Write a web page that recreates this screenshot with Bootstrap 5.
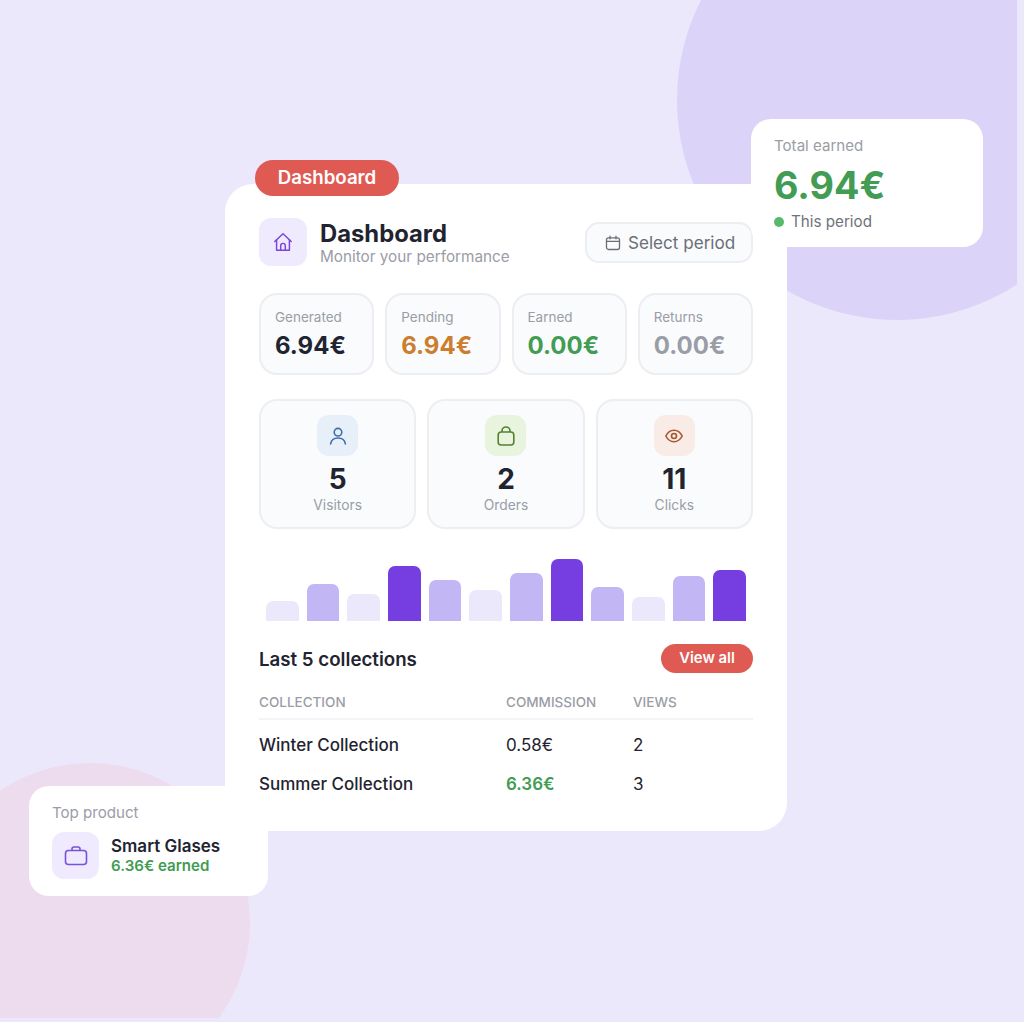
<!DOCTYPE html>
<html lang="en">
<head>
  <meta charset="UTF-8">
  <meta name="viewport" content="width=device-width, initial-scale=1.0">
  <title>Dashboard</title>
  <link href="https://cdn.jsdelivr.net/npm/bootstrap@5.3.0/dist/css/bootstrap.min.css" rel="stylesheet">
  <style>
    body {
      margin: 0;
      background-color: #ece8fc;
      font-family: Inter, "Liberation Sans", sans-serif;
      color: #1f2430;
    }
    .canvas {
      position: relative;
      width: 1024px;
      height: 1022px;
      overflow: hidden;
      background-color: #ece8fc;
    }
    .blob-clip {
      position: absolute;
      left: 0;
      top: 0;
      width: 1017px;
      height: 1018px;
      overflow: hidden;
    }
    .blob-purple {
      position: absolute;
      left: 677px;
      top: -120px;
      width: 440px;
      height: 440px;
      border-radius: 50%;
      background-color: #dcd4f8;
    }
    .blob-pink {
      position: absolute;
      left: -70px;
      top: 763px;
      width: 320px;
      height: 320px;
      border-radius: 50%;
      background-color: #eddcee;
    }
    .panel {
      position: absolute;
      left: 225px;
      top: 184px;
      width: 562px;
      height: 647px;
      padding: 34px;
      background-color: #fff;
      border-radius: 28px;
    }
    .tag-red {
      position: absolute;
      left: 255px;
      top: 160px;
      width: 144px;
      height: 36px;
      border-radius: 18px;
      background-color: #e05a54;
      color: #fff;
      font-weight: 600;
      font-size: 18.7px;
      line-height: 36px;
      text-align: center;
    }
    .float-total {
      position: absolute;
      left: 751px;
      top: 119px;
      width: 232px;
      height: 128px;
      padding: 17px 23px;
      background-color: #fff;
      border-radius: 20px;
    }
    .float-top {
      position: absolute;
      left: 29px;
      top: 786px;
      width: 239px;
      height: 110px;
      padding: 17px 23px;
      background-color: #fff;
      border-radius: 20px;
    }
    .muted {
      color: #9a9da6;
    }
    .total-label {
      font-size: 15.1px;
      line-height: 20px;
    }
    .total-value {
      color: #429c53;
      font-size: 37.7px;
      font-weight: 700;
      line-height: 44px;
      margin-top: 7px;
    }
    .total-note {
      gap: 7px;
      font-size: 15.2px;
      line-height: 20px;
      color: #6f727b;
      margin-top: 5px;
    }
    .dot {
      width: 10px;
      height: 10px;
      border-radius: 50%;
      background-color: #55bb6a;
    }
    .icon-box {
      display: flex;
      align-items: center;
      justify-content: center;
      flex-shrink: 0;
      border-radius: 12px;
    }
    .head-icon {
      width: 48px;
      height: 48px;
      background-color: #efeafd;
    }
    .head-title {
      font-size: 23.8px;
      font-weight: 700;
      line-height: 29px;
    }
    .head-sub {
      font-size: 15.3px;
      line-height: 18px;
    }
    .head-left {
      gap: 13px;
    }
    .period-btn {
      display: flex;
      align-items: center;
      gap: 7px;
      width: 168px;
      height: 41px;
      margin-top: 4px;
      padding: 0 14px 0 18px;
      border: 2px solid #eceef1;
      border-radius: 14px;
      background-color: #f9fbfd;
      color: #6b6e77;
      font-size: 17.1px;
      white-space: nowrap;
    }
    .period-btn svg {
      flex-shrink: 0;
    }
    .stat-row {
      display: grid;
      grid-template-columns: repeat(4, 1fr);
      gap: 11px;
      margin-top: 27px;
    }
    .stat-box {
      height: 82px;
      padding: 13px 14px;
      border: 2px solid #eceef1;
      border-radius: 18px;
      background-color: #f9fbfd;
    }
    .stat-label {
      font-size: 13.5px;
      line-height: 18px;
    }
    .stat-value {
      font-size: 24px;
      font-weight: 700;
      line-height: 30px;
      margin-top: 5px;
    }
    .c-orange { color: #cc7d2e; }
    .c-green { color: #429c53; }
    .c-grey { color: #9a9da6; }
    .count-row {
      display: grid;
      grid-template-columns: repeat(3, 1fr);
      gap: 11px;
      margin-top: 24px;
    }
    .count-box {
      height: 130px;
      padding-top: 14px;
      border: 2px solid #eceef1;
      border-radius: 18px;
      background-color: #f9fbfd;
      text-align: center;
    }
    .count-icon {
      width: 41px;
      height: 41px;
      margin: 0 auto;
    }
    .bg-blue { background-color: #e7f0f9; }
    .bg-lime { background-color: #e9f4df; }
    .bg-rose { background-color: #f9ebe6; }
    .count-value {
      font-size: 28px;
      font-weight: 700;
      line-height: 34px;
      margin-top: 6px;
    }
    .count-label {
      font-size: 13.8px;
      line-height: 20px;
      margin-top: -1px;
    }
    .bars {
      display: flex;
      align-items: flex-end;
      justify-content: space-between;
      height: 62px;
      margin-top: 30px;
      padding: 0 7px;
    }
    .bar-item {
      width: 32.500px;
      border-radius: 7px 7px 0 0;
    }
    .bar-a { background-color: #ece8fc; }
    .bar-b { background-color: #c3b6f5; }
    .bar-c { background-color: #763de0; }
    .list-head {
      height: 30px;
      margin-top: 22px;
    }
    .list-title {
      padding-top: 4px;
      font-size: 18.7px;
      font-weight: 600;
    }
    .view-btn {
      width: 92px;
      height: 29px;
      border-radius: 15px;
      background-color: #e05a54;
      color: #fff;
      font-size: 14.8px;
      font-weight: 600;
      line-height: 29px;
      text-align: center;
    }
    .coll-table {
      width: 494px;
      margin-top: 14px;
      table-layout: fixed;
      border-collapse: collapse;
      font-size: 17px;
    }
    .coll-table th {
      height: 32px;
      padding: 0 0 1px;
      border-bottom: 2px solid #f3f4f6;
      color: #9a9da6;
      font-size: 13.5px;
      font-weight: 500;
      text-transform: uppercase;
    }
    .coll-table td {
      height: 39px;
      padding: 0;
    }
    .coll-table tbody tr:first-child td {
      height: 46px;
      padding-top: 6px;
    }
    .name-cell {
      font-weight: 500;
    }
    .prod-row {
      gap: 12px;
      margin-top: 9px;
    }
    .prod-icon {
      width: 47px;
      height: 47px;
      background-color: #efeafd;
    }
    .prod-text {
      padding-top: 1px;
    }
    .prod-name {
      font-size: 17px;
      font-weight: 600;
      line-height: 20px;
    }
    .prod-earn {
      color: #429c53;
      font-size: 15.1px;
      font-weight: 600;
      line-height: 20px;
    }
  </style>
</head>
<body>
  <div class="canvas">
    <div class="blob-clip">
      <div class="blob-purple"></div>
      <div class="blob-pink"></div>
    </div>

    <div class="panel">
      <div class="d-flex justify-content-between align-items-start">
        <div class="d-flex head-left align-items-center">
          <div class="icon-box head-icon">
            <svg width="22" height="22" viewBox="0 0 24 24" fill="none" stroke="#7a45dc" stroke-width="1.6" stroke-linejoin="round" stroke-linecap="round"><path d="M3 11.500 12 3l9 8.500"/><path d="M5 9.600V21h14V9.600"/><path d="M9.500 21v-5a2.500 2.500 0 0 1 5 0v5"/></svg>
          </div>
          <div>
            <div class="head-title">Dashboard</div>
            <div class="head-sub muted">Monitor your performance</div>
          </div>
        </div>
        <div class="period-btn">
          <svg width="16" height="16" viewBox="0 0 16 16" fill="none" stroke="#6b6e77" stroke-width="1.3" stroke-linecap="round"><rect x="1.500" y="2.800" width="13" height="11.700" rx="2"/><path d="M1.500 6.400h13M5 1.200v2.600M11 1.200v2.600"/></svg>
          <span>Select period</span>
        </div>
      </div>

      <div class="stat-row">
        <div class="stat-box">
          <div class="stat-label muted">Generated</div>
          <div class="stat-value">6.94€</div>
        </div>
        <div class="stat-box">
          <div class="stat-label muted">Pending</div>
          <div class="stat-value c-orange">6.94€</div>
        </div>
        <div class="stat-box">
          <div class="stat-label muted">Earned</div>
          <div class="stat-value c-green">0.00€</div>
        </div>
        <div class="stat-box">
          <div class="stat-label muted">Returns</div>
          <div class="stat-value c-grey">0.00€</div>
        </div>
      </div>

      <div class="count-row">
        <div class="count-box">
          <div class="icon-box count-icon bg-blue">
            <svg width="20" height="20" viewBox="0 0 20 20" fill="none" stroke="#3f6fa8" stroke-width="1.6" stroke-linecap="round"><circle cx="10" cy="6.200" r="3.800"/><path d="M2.600 18c.6-4 3.600-6 7.400-6s6.800 2 7.400 6"/></svg>
          </div>
          <div class="count-value">5</div>
          <div class="count-label muted">Visitors</div>
        </div>
        <div class="count-box">
          <div class="icon-box count-icon bg-lime">
            <svg width="20" height="20" viewBox="0 0 20 20" fill="none" stroke="#55802f" stroke-width="1.6" stroke-linejoin="round"><rect x="2.200" y="6" width="15.600" height="13" rx="3"/><path d="M6 6V5a4 4 0 0 1 8 0v1"/></svg>
          </div>
          <div class="count-value">2</div>
          <div class="count-label muted">Orders</div>
        </div>
        <div class="count-box">
          <div class="icon-box count-icon bg-rose">
            <svg width="20" height="20" viewBox="0 0 20 20" fill="none" stroke="#a8552c" stroke-width="1.6" stroke-linejoin="round"><path d="M1.800 10C3.800 6.200 6.600 4.300 10 4.300s6.200 1.900 8.200 5.700c-2 3.800-4.800 5.700-8.200 5.700S3.800 13.800 1.800 10Z"/><circle cx="10" cy="10" r="2.500"/></svg>
          </div>
          <div class="count-value">11</div>
          <div class="count-label muted">Clicks</div>
        </div>
      </div>

      <div class="bars" id="bars"></div>

      <div class="list-head d-flex justify-content-between align-items-center">
        <div class="list-title">Last 5 collections</div>
        <div class="view-btn">View all</div>
      </div>

      <table class="coll-table">
        <colgroup><col style="width: 247px"><col style="width: 127px"><col></colgroup>
        <thead>
          <tr><th>Collection</th><th>Commission</th><th>Views</th></tr>
        </thead>
        <tbody>
          <tr><td class="name-cell">Winter Collection</td><td>0.58€</td><td>2</td></tr>
          <tr><td class="name-cell">Summer Collection</td><td class="c-green fw-semibold">6.36€</td><td>3</td></tr>
        </tbody>
      </table>
    </div>

    <div class="tag-red">Dashboard</div>

    <div class="float-total">
      <div class="total-label muted">Total earned</div>
      <div class="total-value">6.94€</div>
      <div class="total-note d-flex align-items-center"><span class="dot"></span><span>This period</span></div>
    </div>

    <div class="float-top">
      <div class="total-label muted">Top product</div>
      <div class="d-flex align-items-center prod-row">
        <div class="icon-box prod-icon">
          <svg width="24" height="24" viewBox="0 0 24 24" fill="none" stroke="#7a52d8" stroke-width="1.6" stroke-linejoin="round"><rect x="1.500" y="6.500" width="21" height="14" rx="3"/><path d="M8 6.500V5a2 2 0 0 1 2-2h4a2 2 0 0 1 2 2v1.500"/></svg>
        </div>
        <div class="prod-text">
          <div class="prod-name">Smart Glases</div>
          <div class="prod-earn">6.36€ earned</div>
        </div>
      </div>
    </div>
  </div>

  <script>
    // Bar heights and tone, left to right
    const bars = [[20,'a'],[37,'b'],[27,'a'],[55,'c'],[41,'b'],[31,'a'],[48,'b'],[62,'c'],[34,'b'],[24,'a'],[45,'b'],[51,'c']];
    const barRow = document.getElementById('bars');
    bars.forEach(([h, tone]) => {
      const el = document.createElement('div');
      el.className = `bar-item bar-${tone}`;
      el.style.height = `${h}px`;
      barRow.appendChild(el);
    });
  </script>
  <script src="https://cdn.jsdelivr.net/npm/bootstrap@5.3.0/dist/js/bootstrap.bundle.min.js"></script>
</body>
</html>
